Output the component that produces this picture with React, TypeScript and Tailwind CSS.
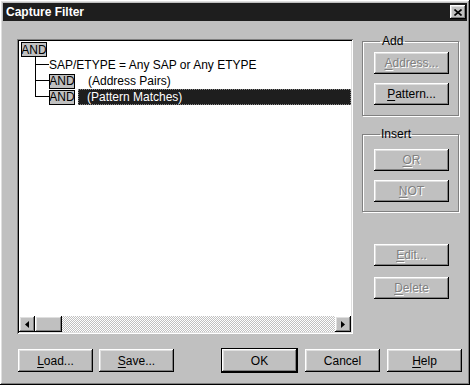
import React from "react";

const raised =
  "shadow-[inset_-1px_-1px_0_#000,inset_1px_1px_0_#fff,inset_-2px_-2px_0_#808080,inset_2px_2px_0_#dfdfdf]";

function Btn({
  label,
  u,
  disabled,
  def,
  className = "",
}: {
  label: string;
  u?: number;
  disabled?: boolean;
  def?: boolean;
  className?: string;
}) {
  const text =
    u === undefined ? (
      label
    ) : (
      <>
        {label.slice(0, u)}
        <span className="underline underline-offset-2">{label[u]}</span>
        {label.slice(u + 1)}
      </>
    );
  return (
    <div
      className={`flex items-center justify-center w-[75px] bg-[#c0c0c0] ${raised} ${
        def ? "outline outline-1 outline-black" : ""
      } ${disabled ? "text-[#808080] [text-shadow:1px_1px_0_#fff]" : "text-black"} ${className}`}
    >
      {text}
    </div>
  );
}

function AndBox() {
  return (
    <div className="flex items-center justify-center w-[26px] h-[15px] bg-[#c0c0c0] border border-black leading-none text-[12px]">
      AND
    </div>
  );
}

function Connector({ last }: { last?: boolean }) {
  return (
    <div className="flex flex-col w-[14px] h-[16px] shrink-0">
      <div className="h-[8px] border-l border-b border-black" />
      <div className={`h-[8px] ${last ? "" : "border-l border-black"}`} />
    </div>
  );
}

export default function App() {
  return (
    <div
      className={`w-[470px] h-[385px] bg-[#c0c0c0] p-[3px] flex flex-col text-[12px] text-black ${raised}`}
      style={{ fontFamily: '"Liberation Sans", Arial, sans-serif' }}
    >
      {/* title bar */}
      <div className="h-[18px] bg-[#1e1e1e] flex items-center justify-between pl-[3px] pr-[1px]">
        <span className="text-white font-bold text-[12px] leading-none">Capture Filter</span>
        <div className={`w-[16px] h-[14px] bg-[#c0c0c0] flex items-center justify-center ${raised}`}>
          <svg width="8" height="7" viewBox="0 0 8 7">
            <path d="M0.5 0.5 L7.5 6.5 M7.5 0.5 L0.5 6.5" stroke="#000" strokeWidth="1.6" />
          </svg>
        </div>
      </div>

      {/* body */}
      <div className="flex pl-[14px]">
        {/* tree panel */}
        <div className="mt-[18px] w-[336px] h-[295px] p-[2px] bg-white flex flex-col shadow-[inset_1px_1px_0_#808080,inset_-1px_-1px_0_#fff,inset_2px_2px_0_#000,inset_-2px_-2px_0_#dfdfdf]">
          <div className="flex-1 pt-[1px] pl-[2px]">
            <AndBox />
            <div className="ml-[14px]">
              <div className="flex items-center h-[16px]">
                <Connector />
                <span className="leading-none">SAP/ETYPE = Any SAP or Any ETYPE</span>
              </div>
              <div className="flex items-center h-[16px]">
                <Connector />
                <AndBox />
                <span className="ml-[13px] leading-none">(Address Pairs)</span>
              </div>
              <div className="flex items-center h-[16px]">
                <Connector last />
                <AndBox />
                <div className="ml-[3px] flex-1 h-[16px] bg-[#1e1e1e] text-white flex items-center pl-[9px] outline outline-1 outline-dotted outline-[#888] -outline-offset-1">
                  <span className="leading-none">(Pattern Matches)</span>
                </div>
              </div>
            </div>
          </div>
          {/* horizontal scrollbar */}
          <div className="h-[16px] flex bg-[repeating-conic-gradient(#fff_0_25%,#c0c0c0_0_50%)] bg-[length:2px_2px]">
            <div className={`w-[16px] h-[16px] bg-[#c0c0c0] flex items-center justify-center ${raised}`}>
              <svg width="4" height="7" viewBox="0 0 4 7">
                <path d="M4 0 L0 3.5 L4 7 Z" fill="#000" />
              </svg>
            </div>
            <div className={`w-[27px] h-[16px] bg-[#c0c0c0] ${raised}`} />
            <div className="flex-1" />
            <div className={`w-[16px] h-[16px] bg-[#c0c0c0] flex items-center justify-center ${raised}`}>
              <svg width="4" height="7" viewBox="0 0 4 7">
                <path d="M0 0 L4 3.5 L0 7 Z" fill="#000" />
              </svg>
            </div>
          </div>
        </div>

        {/* right column */}
        <div className="ml-[9px] w-[97px] mt-[13px] flex flex-col">
          <fieldset className="border border-[#808080] shadow-[1px_1px_0_#fff,inset_1px_1px_0_#fff] pl-[11px] pb-[10px]">
            <legend className="ml-[6px] px-[2px] leading-[14px]">Add</legend>
            <Btn label="Address..." u={0} disabled className="h-[22px] mt-[4px]" />
            <Btn label="Pattern..." u={0} className="h-[22px] mt-[9px]" />
          </fieldset>
          <fieldset className="mt-[11px] border border-[#808080] shadow-[1px_1px_0_#fff,inset_1px_1px_0_#fff] pl-[11px] pb-[9px]">
            <legend className="ml-[6px] px-[1px] leading-[14px]">Insert</legend>
            <Btn label="OR" u={0} disabled className="h-[22px] mt-[8px]" />
            <Btn label="NOT" u={0} disabled className="h-[22px] mt-[9px]" />
          </fieldset>
          <div className="pl-[12px] mt-[32px] flex flex-col">
            <Btn label="Edit..." u={0} disabled className="h-[22px]" />
            <Btn label="Delete" u={0} disabled className="h-[22px] mt-[11px]" />
          </div>
        </div>
      </div>

      {/* bottom buttons */}
      <div className="flex mt-[15px] pl-[15px]">
        <Btn label="Load..." u={0} className="h-[23px]" />
        <Btn label="Save..." u={0} className="h-[23px] ml-[6px]" />
        <Btn label="OK" def className="h-[23px] ml-[48px]" />
        <Btn label="Cancel" className="h-[23px] ml-[8px]" />
        <Btn label="Help" u={0} className="h-[23px] ml-[7px]" />
      </div>
    </div>
  );
}
